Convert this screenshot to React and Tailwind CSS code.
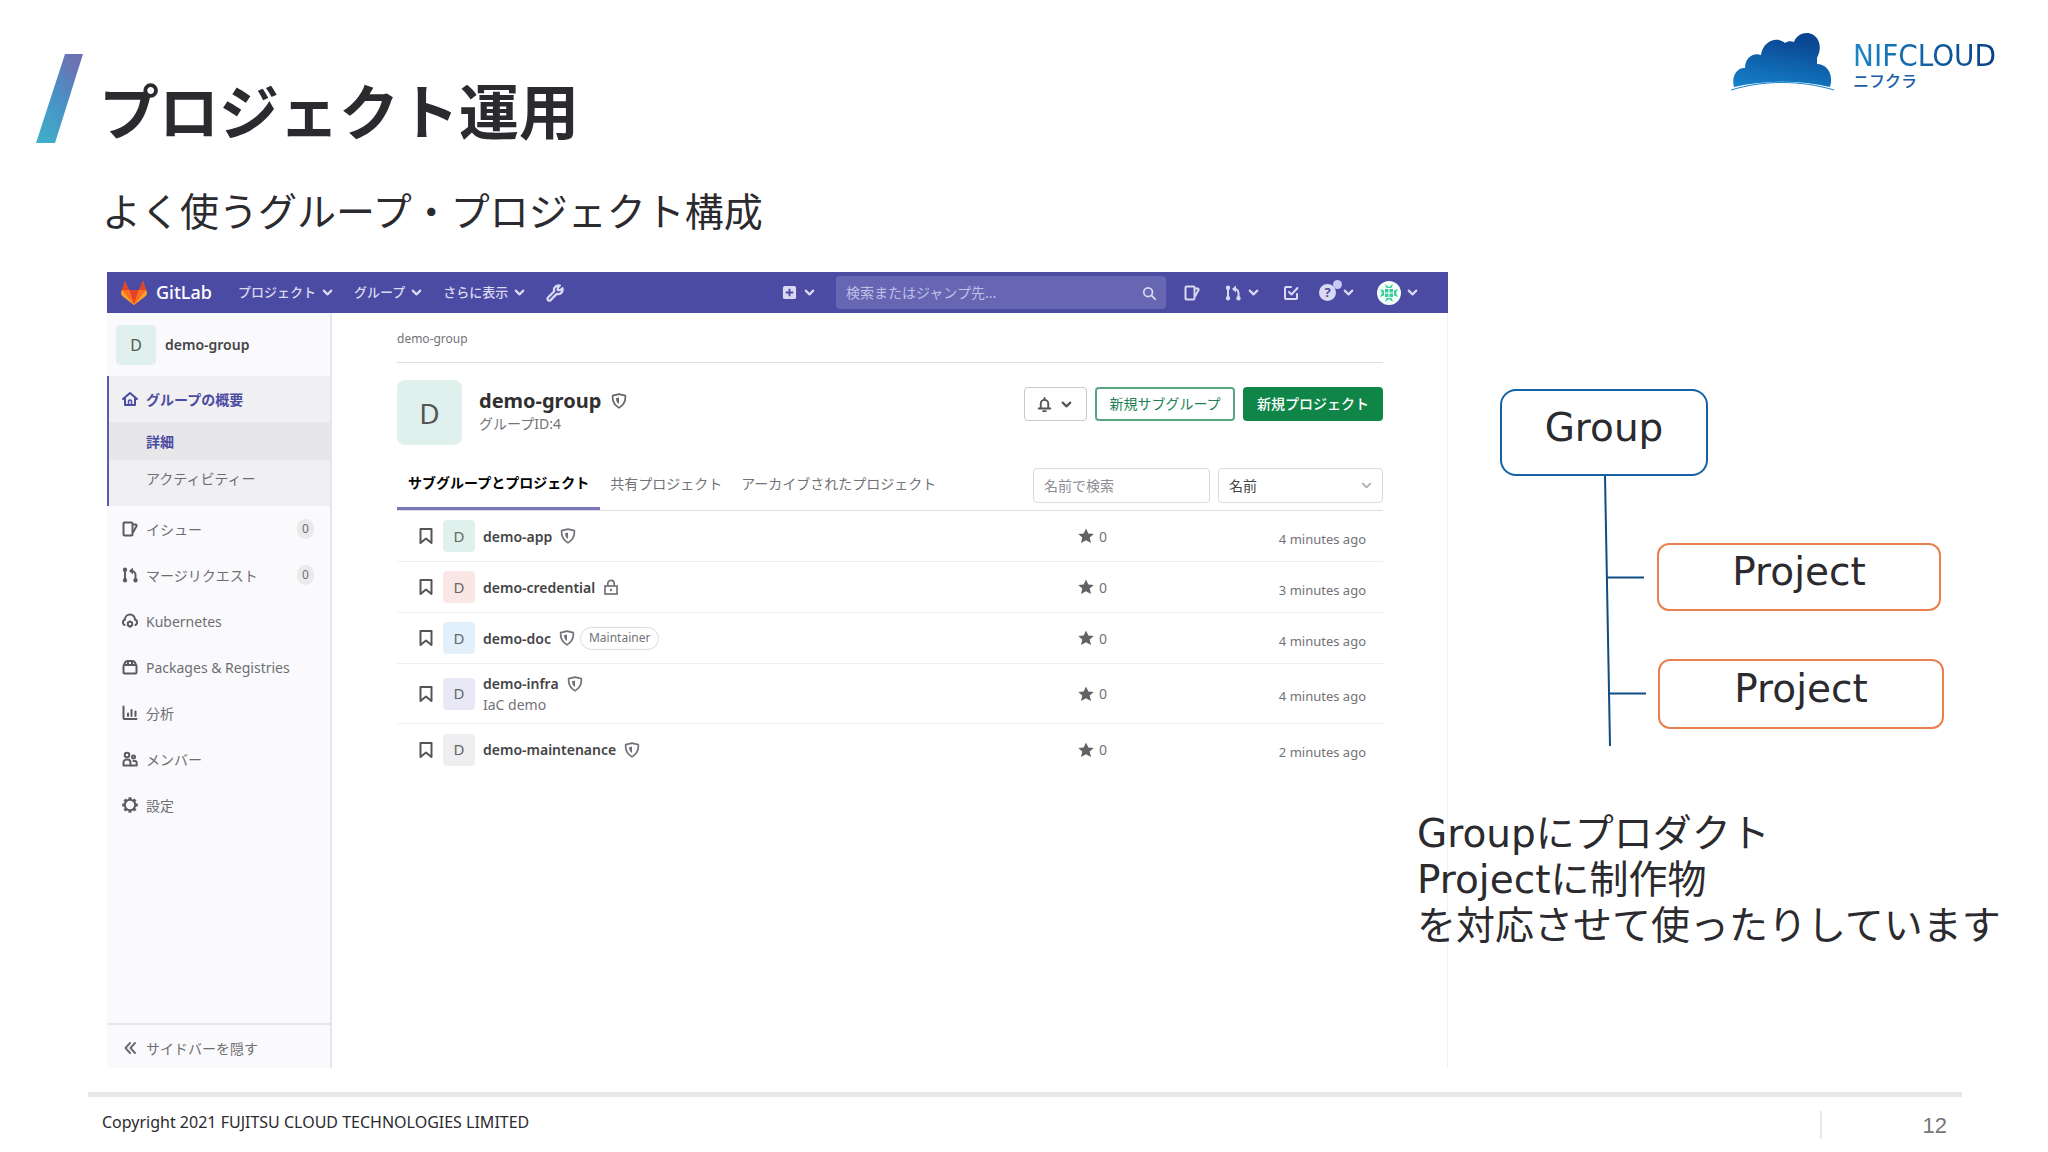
import React from "react";
import clsx from "clsx";

const iconPaths = {
  chevron: <path d="M4 6l4 4 4-4" strokeLinecap="round" strokeLinejoin="round" />,
  home: (
    <>
      <path d="M1 8l7-6 7 6" strokeLinecap="round" strokeLinejoin="round" />
      <path d="M3 7v7h10V7" strokeLinejoin="round" />
      <path d="M6.500 14v-3.500a1.500 1.500 0 0 1 3 0V14" strokeWidth="1.500" />
    </>
  ),
  issues: (
    <>
      <rect x="1.500" y="1.500" width="9" height="13" rx="1" />
      <path d="M10.500 3.500h3a1 1 0 0 1 1 1.500L11 11.500" strokeLinejoin="round" />
    </>
  ),
  merge: (
    <>
      <path d="M3 3v10M13.500 13V8a4 4 0 0 0-4-4H9" />
      <circle cx="3" cy="2.800" r="1.200" fill="currentColor" />
      <circle cx="3" cy="13.200" r="1.200" fill="currentColor" />
      <circle cx="13.500" cy="13.200" r="1.200" fill="currentColor" />
      <path d="M11 .5L7 4l4 3.500z" fill="currentColor" stroke="none" />
    </>
  ),
  cloudGear: (
    <>
      <path d="M2.500 12A3 3 0 0 1 3 6.500a5 5 0 0 1 10 0A3 3 0 0 1 13.500 12" strokeLinecap="round" />
      <circle cx="8" cy="11" r="2.200" />
      <path d="M8 7.500v1M8 13.500v1.500M5 9.300l.8.5M11 9.300l-.8.5M5 12.700l.8-.5M11 12.700l-.8-.5" strokeWidth="1.300" />
    </>
  ),
  package: (
    <>
      <rect x="1.500" y="6" width="13" height="8.500" rx="1" />
      <path d="M2 6.500C2.500 3.500 4.500 2 6 2h4c1.500 0 3.500 1.500 4 4.500M6 2.500V6M10 2.500V6" />
    </>
  ),
  chart: (
    <>
      <path d="M1.500 1.500V13a1 1 0 0 0 1 1h12" strokeLinecap="round" />
      <path d="M6 8.500V11M9.500 5v6M13.500 6.500V11" strokeLinecap="round" />
    </>
  ),
  users: (
    <>
      <circle cx="5" cy="4" r="2.300" />
      <path d="M1.500 14.500v-3a3 3 0 0 1 3-3h1a3 3 0 0 1 3 3v3z" strokeLinejoin="round" />
      <circle cx="11.500" cy="6" r="1.500" />
      <path d="M8.500 14.500h6.200V12a2 2 0 0 0-2-2h-2" strokeLinejoin="round" />
    </>
  ),
  gear: (
    <>
      <circle cx="8" cy="8" r="5.200" />
      <path
        d="M8 .2v2.600M8 13.200v2.600M.2 8h2.600M13.200 8h2.600M2.500 2.500l1.800 1.800M11.700 11.700l1.800 1.800M2.500 13.500l1.800-1.800M11.700 4.300l1.800-1.800"
        strokeWidth="3"
      />
    </>
  ),
  collapse: <path d="M8 3L3.500 8 8 13M13 3L8.500 8l4.500 5" strokeLinecap="round" strokeLinejoin="round" />,
  shield: (
    <>
      <path d="M8 1.200l6.300 1.500c.6 5.500-1.600 9.300-6.300 12.200-4.700-2.900-6.900-6.700-6.300-12.200z" strokeLinejoin="round" />
      <path d="M8 4.500v6.500C6 9.500 5 8 5 5.200z" fill="currentColor" stroke="none" />
    </>
  ),
  lock: (
    <>
      <rect x="2" y="7" width="12" height="8" />
      <path d="M4.800 7V4.500a3.200 3.200 0 0 1 6.400 0V7" />
      <circle cx="8" cy="11" r="1.200" fill="currentColor" stroke="none" />
    </>
  ),
  bookmark: <path d="M2.500 1h11v14L8 10.500 2.500 15z" strokeLinejoin="round" />,
  star: (
    <path
      d="M8 .5l2.300 5 5.500.5-4.100 3.600 1.300 5.500L8 12.300l-5 2.800 1.300-5.500L.2 6l5.500-.5z"
      fill="currentColor"
      stroke="none"
    />
  ),
  bell: (
    <>
      <path d="M4 12V7a4 4 0 0 1 8 0v5M1.800 12.200h12.400" strokeLinecap="round" />
      <path d="M8 1v2M6.500 15h3" strokeLinecap="round" />
    </>
  ),
  search: (
    <>
      <circle cx="7" cy="7" r="5" />
      <path d="M11 11l4 4" strokeLinecap="round" />
    </>
  ),
  todo: (
    <>
      <path d="M8 2H3a1 1 0 0 0-1 1v10a1 1 0 0 0 1 1h10a1 1 0 0 0 1-1V9" strokeLinecap="round" />
      <path d="M6 7l2.500 2.500L14.500 3" strokeLinecap="round" strokeLinejoin="round" />
    </>
  ),
  wrench: (
    <path
      d="M10.500 5.500V3.200L12.300 1.400A4 4 0 0 0 7.300 6.500L1.800 12a1.600 1.600 0 0 0 2.300 2.300L9.500 8.800a4 4 0 0 0 5.100-5L12.800 5.500z"
      strokeLinejoin="round"
    />
  ),
  plus: (
    <>
      <rect x="1" y="1" width="14" height="14" rx="2" fill="currentColor" stroke="none" />
      <path d="M8 4v8M4 8h8" stroke="#4b4ba3" />
    </>
  ),
};

function Icon({ name, className = "size-4", stroke = 2 }) {
  return (
    <svg viewBox="0 0 16 16" fill="none" stroke="currentColor" strokeWidth={stroke} className={clsx("shrink-0", className)} aria-hidden="true">
      {iconPaths[name]}
    </svg>
  );
}

const Chevron = () => <Icon name="chevron" className="size-[15px]" stroke={2.3} />;

function NifcloudLogo() {
  return (
    <div className="flex items-start gap-[17px]">
      <svg width="106" height="58" viewBox="0 0 106 58" aria-hidden="true">
        <defs>
          <linearGradient id="cloud" x1="0" y1="1" x2="0.3" y2="0">
            <stop offset="0" stopColor="#1583cb" />
            <stop offset="1" stopColor="#0a4591" />
          </linearGradient>
        </defs>
        <path
          d="M4 54C1 44 7 34 15 35C15 25 23 19 31 22C33 8 47 3 55 10C58 8 61 8 64 9C68 -2 83 -3 88 7C91 13 90 19 87 25V31C97 31 104 41 100 54C70 47 34 47 4 54Z"
          fill="url(#cloud)"
        />
        <path d="M1 57C34 47 70 47 104 57" fill="none" stroke="#1583cb" strokeWidth="1" />
      </svg>
      <div className="mt-[4px]">
        <div className="bg-gradient-to-r from-[#1a86c9] to-[#0b3f86] bg-clip-text font-['DejaVu_Sans_Condensed','DejaVu_Sans',sans-serif] text-[31px] leading-[36px] text-transparent">
          NIFCLOUD
        </div>
        <div className="text-[16px] leading-[16px] font-medium text-[#1a5ea9]">ニフクラ</div>
      </div>
    </div>
  );
}

function GitlabFox() {
  return (
    <svg width="26" height="24" viewBox="0 0 26 24" aria-hidden="true">
      <path d="M13 24L1 14.500 0 12 4 0l4 9h10l4-9 4 12-1 2.500z" fill="#fc6d26" />
      <path d="M13 24L8 9h10z" fill="#e24329" />
      <path d="M0 12l1-3h7l5 15L1 14.800zM26 12l-1-3h-7l-5 15 12-9.200z" fill="#fca326" />
      <path d="M1 9h7l5 15zM25 9h-7l-5 15z" fill="#fc6d26" />
      <path d="M4 0l4 9H1zM22 0l-4 9h7z" fill="#e24329" />
    </svg>
  );
}

function UserAvatar() {
  return (
    <svg width="24" height="24" viewBox="0 0 24 24" aria-hidden="true">
      <circle cx="12" cy="12" r="12" fill="#f4fffb" />
      <g fill="#3ccf9c">
        <path d="M8 8h3.500v3.500H8zM12.500 8H16v3.500h-3.500zM8 12.500h3.500V16H8zM12.500 12.500H16V16h-3.500z" />
        <path d="M8 3l4 3 4-3-1.500 4h-5zM8 21l4-3 4 3-1.500-4h-5zM3 8l4 1.500v5L3 16l2-4zM21 8l-4 1.500v5l4 1.500-2-4z" />
      </g>
    </svg>
  );
}

function NavMenu({ children }) {
  return (
    <button className="flex items-center gap-[4px] text-[13px] font-medium">
      {children}
      <Chevron />
    </button>
  );
}

function TopNav() {
  return (
    <nav className="flex h-[41px] items-center bg-[#4b4ba3] pr-[28px] pl-[14px] text-[#d9d9f2]">
      <a href="#" className="flex items-center gap-[9px] text-[18px] font-medium text-white">
        <GitlabFox />
        GitLab
      </a>
      <div className="ml-[26px] flex items-center gap-[19px]">
        <NavMenu>プロジェクト</NavMenu>
        <NavMenu>グループ</NavMenu>
        <NavMenu>さらに表示</NavMenu>
        <button aria-label="管理者エリア">
          <Icon name="wrench" className="size-[18px]" />
        </button>
      </div>
      <button aria-label="新規作成" className="ml-auto flex items-center gap-[5px]">
        <Icon name="plus" className="size-[15px]" />
        <Chevron />
      </button>
      <div className="ml-[19px] flex h-[33px] w-[330px] items-center rounded bg-[#6666b3] px-[10px]">
        <input
          type="search"
          aria-label="検索"
          placeholder="検索またはジャンプ先..."
          className="min-w-0 flex-1 bg-transparent text-[14px] outline-none placeholder:text-[#c0c0e6]"
        />
        <Icon name="search" className="size-[14px]" />
      </div>
      <button aria-label="イシュー" className="ml-[18px]">
        <Icon name="issues" />
      </button>
      <button aria-label="マージリクエスト" className="ml-[25px] flex items-center gap-[5px]">
        <Icon name="merge" />
        <Chevron />
      </button>
      <button aria-label="To-Do" className="ml-[22px]">
        <Icon name="todo" />
      </button>
      <button aria-label="ヘルプ" className="relative ml-[20px] flex items-center gap-[5px]">
        <span className="flex size-[17px] items-center justify-center rounded-full bg-[#d9d9f2] text-[13px] leading-none font-bold text-[#4b4ba3]">?</span>
        <span className="absolute -top-[4px] left-[14px] size-[9px] rounded-full bg-[#c9c9f5]" />
        <Chevron />
      </button>
      <button aria-label="アカウント" className="ml-[21px] flex items-center gap-[4px]">
        <UserAvatar />
        <Chevron />
      </button>
    </nav>
  );
}

const menuItems = [
  { icon: "issues", label: "イシュー", count: 0 },
  { icon: "merge", label: "マージリクエスト", count: 0 },
  { icon: "cloudGear", label: "Kubernetes" },
  { icon: "package", label: "Packages & Registries" },
  { icon: "chart", label: "分析" },
  { icon: "users", label: "メンバー" },
  { icon: "gear", label: "設定" },
];

function Sidebar() {
  return (
    <aside className="flex w-[225px] shrink-0 flex-col border-r-2 border-[#e6e5e9] bg-[#fafafc] text-[14px] text-[#6e6e72]">
      <a href="#" className="flex h-[63px] items-center gap-[9px] pl-[9px] font-semibold text-[#444446]">
        <span className="flex size-[40px] items-center justify-center rounded bg-[#e0f1ed] text-[16px] font-normal text-[#555]">D</span>
        demo-group
      </a>
      <div className="border-l-2 border-[#5b5bb0] bg-[#f0f0f2]">
        <a href="#" className="flex h-[46px] items-center gap-[8px] pl-[13px] font-bold text-[#4b4ba3]">
          <Icon name="home" />
          グループの概要
        </a>
        <a href="#" className="flex h-[38px] items-center bg-[#e7e7e9] pl-[37px] font-bold text-[#4b4ba3]">
          詳細
        </a>
        <a href="#" className="flex h-[46px] items-start pt-[8px] pl-[37px]">
          アクティビティー
        </a>
      </div>
      {menuItems.map((item) => (
        <a key={item.label} href="#" className="flex h-[46px] items-center gap-[8px] pr-[16px] pl-[15px]">
          <Icon name={item.icon} className="size-4 text-[#5c5c60]" />
          {item.label}
          {item.count !== undefined && (
            <span className="ml-auto flex h-[20px] w-[17px] items-center justify-center rounded-full bg-[#eaeaec] text-[12px]">
              {item.count}
            </span>
          )}
        </a>
      ))}
      <button className="mt-auto flex h-[45px] items-center gap-[8px] border-t-2 border-[#e6e5e9] pt-[3px] pl-[15px]">
        <Icon name="collapse" />
        サイドバーを隠す
      </button>
    </aside>
  );
}

const projects = [
  { name: "demo-app", avatar: "bg-[#e0f1ed]", icon: "shield", updated: "4 minutes ago" },
  { name: "demo-credential", avatar: "bg-[#fae6e4]", icon: "lock", updated: "3 minutes ago" },
  { name: "demo-doc", avatar: "bg-[#e2f0fb]", icon: "shield", role: "Maintainer", updated: "4 minutes ago" },
  { name: "demo-infra", avatar: "bg-[#e8e8f7]", icon: "shield", description: "IaC demo", updated: "4 minutes ago" },
  { name: "demo-maintenance", avatar: "bg-[#eeedef]", icon: "shield", updated: "2 minutes ago" },
];

function ProjectRow({ project }) {
  return (
    <li
      className={clsx(
        "flex items-center border-b border-[#efedf2] pr-[17px] pl-[21px] last:border-b-0",
        project.description ? "h-[60px]" : "h-[51px]"
      )}
    >
      <Icon name="bookmark" className="size-[16px] text-[#555]" />
      <span className={clsx("ml-[9px] flex size-[32px] items-center justify-center rounded-sm text-[15px] text-[#666]", project.avatar)}>D</span>
      <div className="ml-[8px]">
        <div className="flex h-[22px] items-center gap-[8px]">
          <a href="#" className="text-[14px] font-semibold text-[#444446]">
            {project.name}
          </a>
          <Icon name={project.icon} stroke={1.7} />
          {project.role && (
            <span className="-ml-[3px] flex h-[23px] items-center rounded-full border border-[#dcdade] px-[8px] text-[12px]">
              {project.role}
            </span>
          )}
        </div>
        {project.description && <p className="text-[14px] leading-[20px]">{project.description}</p>}
      </div>
      <span className="ml-auto flex items-center gap-[5px] text-[14px]">
        <Icon name="star" className="size-4 text-[#626166]" />0
      </span>
      <time className="w-[259px] pt-[7px] text-right text-[13px]">{project.updated}</time>
    </li>
  );
}

function GroupPage() {
  return (
    <div className="min-w-0 flex-1 border-r border-[#f1eff4] pr-[64px] pl-[65px] text-[#737278]">
      <div className="flex h-[50px] items-center border-b border-[#dddce0] pt-[3px] text-[12px]">
        <a href="#">demo-group</a>
      </div>
      <div className="flex items-start pt-[17px]">
        <span className="flex size-[65px] items-center justify-center rounded-lg bg-[#e0f1ed] text-[28px] text-[#555]">D</span>
        <div className="ml-[17px] pt-[8px]">
          <h2 className="flex items-center gap-[10px] text-[20px] leading-[26px] font-bold text-[#303030]">
            demo-group
            <Icon name="shield" className="size-4 text-[#666]" stroke={1.7} />
          </h2>
          <p className="text-[14px] leading-[20px]">グループID:4</p>
        </div>
        <div className="ml-auto flex gap-[8px] pt-[7px] text-[14px]">
          <button aria-label="通知" className="flex h-[34px] w-[63px] items-center justify-center gap-[7px] rounded border border-[#c9c8cd] text-[#555]">
            <Icon name="bell" className="size-[15px]" />
            <Chevron />
          </button>
          <button className="h-[34px] w-[140px] rounded border-2 border-[#5aa583] pb-[2px] text-[#217f55]">新規サブグループ</button>
          <button className="h-[34px] w-[140px] rounded bg-[#108548] pb-[2px] font-medium text-white">新規プロジェクト</button>
        </div>
      </div>
      <div className="mt-[15px] flex h-[51px] border-b border-[#dddce0] text-[14px]">
        <div className="flex gap-[1px]">
          <button className="border-b-3 border-[#7b77bd] px-[11px] pb-[2px] font-bold text-black">サブグループとプロジェクト</button>
          <button className="px-[9px] pb-[4px]">共有プロジェクト</button>
          <button className="px-[9px] pb-[4px]">アーカイブされたプロジェクト</button>
        </div>
        <div className="ml-auto flex gap-[8px] pt-[8px]">
          <input
            type="text"
            aria-label="名前で検索"
            placeholder="名前で検索"
            className="h-[35px] w-[177px] rounded border border-[#dcdade] px-[10px] placeholder:text-[#8d8c91]"
          />
          <div className="relative">
            <select aria-label="並び替え" className="h-[35px] w-[165px] appearance-none rounded border border-[#dcdade] px-[10px] text-[#444]">
              <option>名前</option>
            </select>
            <Icon name="chevron" className="pointer-events-none absolute top-[10px] right-[9px] size-[15px] text-[#b0b0b4]" />
          </div>
        </div>
      </div>
      <ul>
        {projects.map((project) => (
          <ProjectRow key={project.name} project={project} />
        ))}
      </ul>
    </div>
  );
}

function GroupDiagram() {
  return (
    <div className="relative h-[357px]">
      <svg width="150" height="357" viewBox="0 0 150 357" className="absolute top-0 left-[100px]" stroke="#0f4c81" strokeWidth="2" aria-hidden="true">
        <path d="M57 87L62 357M58 188.500h38M60 304.500h38" fill="none" />
      </svg>
      <div className="absolute top-0 left-[52px] flex h-[87px] w-[208px] items-center justify-center rounded-2xl border-2 border-[#1462a5] bg-white pb-[10px]">
        Group
      </div>
      <div className="absolute top-[154px] left-[209px] flex h-[68px] w-[284px] items-center justify-center rounded-xl border-2 border-[#e8804f] bg-white pb-[10px]">
        Project
      </div>
      <div className="absolute top-[270px] left-[210px] flex h-[70px] w-[286px] items-center justify-center rounded-xl border-2 border-[#e8804f] bg-white pb-[10px]">
        Project
      </div>
    </div>
  );
}

export default function App() {
  return (
    <div className="flex min-h-screen flex-col bg-white font-['Noto_Sans','Noto_Sans_CJK_JP',sans-serif] text-[#2b2a2e]">
      <header className="flex items-start justify-between pt-[33px] pr-[52px] pl-[36px]">
        <div className="mt-[21px] flex items-end gap-[16px]">
          <svg width="47" height="89" viewBox="0 0 47 89" aria-hidden="true">
            <defs>
              <linearGradient id="slash" x1="0" y1="1" x2="0.6" y2="0">
                <stop offset="0" stopColor="#3fb2c8" />
                <stop offset="0.6" stopColor="#4a90c4" />
                <stop offset="1" stopColor="#6a74b4" />
              </linearGradient>
            </defs>
            <path d="M29 0h18L19 89H0z" fill="url(#slash)" />
          </svg>
          <h1 className="text-[60px] leading-[62px] font-bold">プロジェクト運用</h1>
        </div>
        <NifcloudLogo />
      </header>
      <p className="mt-[48px] ml-[102px] text-[39px] leading-[40px]">よく使うグループ・プロジェクト構成</p>

      <main className="mt-[41px] flex flex-1 pl-[107px]">
        <section className="flex min-w-0 flex-1 flex-col">
          <TopNav />
          <div className="flex flex-1">
            <Sidebar />
            <GroupPage />
          </div>
        </section>
        <section className="w-[600px] shrink-0 pt-[117px] font-['DejaVu_Sans','Noto_Sans_CJK_JP',sans-serif] text-[39px] leading-[46px]">
          <GroupDiagram />
          <p className="relative mt-[65px] -ml-[31px]">
            Groupにプロダクト
            <br />
            Projectに制作物
            <br />
            を対応させて使ったりしています
          </p>
        </section>
      </main>

      <footer className="mt-[24px] mr-[86px] ml-[88px] flex h-[60px] justify-between border-t-5 border-[#e9e8eb]">
        <p className="pt-[13px] pl-[14px] text-[16px] leading-[24px]">Copyright 2021 FUJITSU CLOUD TECHNOLOGIES LIMITED</p>
        <p className="mt-[14px] h-[28px] w-[142px] border-l-2 border-[#e9e8eb] pr-[15px] text-right font-['Liberation_Sans',sans-serif] text-[22px] leading-[30px] text-[#77767a]">
          12
        </p>
      </footer>
    </div>
  );
}
